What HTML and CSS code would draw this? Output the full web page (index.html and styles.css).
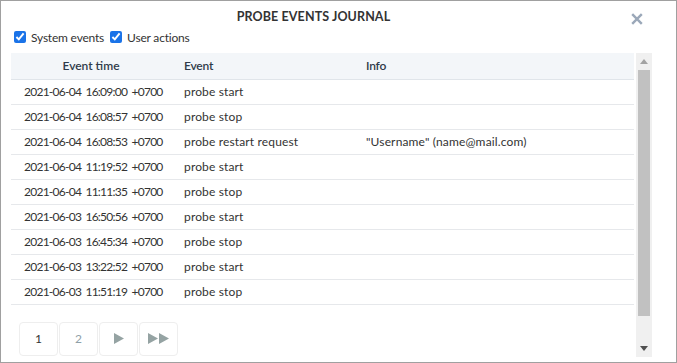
FILE: index.html
```html
<!DOCTYPE html>
<html>
<head>
<meta charset="utf-8">
<link rel="stylesheet" href="styles.css">
</head>
<body>
<div class="dialog">
  <div class="titlebar">
    <div class="title">PROBE EVENTS JOURNAL</div>
    <div class="close" aria-label="close">
      <svg width="12" height="12" viewBox="0 0 12 12"><path d="M1.2 1.2 L10.8 10.8 M10.8 1.2 L1.2 10.8" stroke="#9ba8b9" stroke-width="2.4" fill="none"/></svg>
    </div>
  </div>
  <div class="filters">
    <label class="check"><input type="checkbox" checked> System events</label>
    <label class="check"><input type="checkbox" checked> User actions</label>
  </div>
  <div class="scrollarea">
    <div class="content">
      <table class="events">
        <thead>
          <tr><th class="c-time">Event time</th><th class="c-event">Event</th><th class="c-info">Info</th></tr>
        </thead>
        <tbody>
          <tr><td class="time">2021-06-04 16:09:00 +0700</td><td>probe start</td><td></td></tr>
          <tr><td class="time">2021-06-04 16:08:57 +0700</td><td>probe stop</td><td></td></tr>
          <tr><td class="time">2021-06-04 16:08:53 +0700</td><td>probe restart request</td><td>"Username" (name@mail.com)</td></tr>
          <tr><td class="time">2021-06-04 11:19:52 +0700</td><td>probe start</td><td></td></tr>
          <tr><td class="time">2021-06-04 11:11:35 +0700</td><td>probe stop</td><td></td></tr>
          <tr><td class="time">2021-06-03 16:50:56 +0700</td><td>probe start</td><td></td></tr>
          <tr><td class="time">2021-06-03 16:45:34 +0700</td><td>probe stop</td><td></td></tr>
          <tr><td class="time">2021-06-03 13:22:52 +0700</td><td>probe start</td><td></td></tr>
          <tr><td class="time">2021-06-03 11:51:19 +0700</td><td>probe stop</td><td></td></tr>
        </tbody>
      </table>
      <div class="pager">
        <div class="pg current">1</div>
        <div class="pg">2</div>
        <div class="pg"><svg width="12" height="11" viewBox="0 0 12 11"><path d="M1 0 L11 5.5 L1 11 Z" fill="#95a3a3"/></svg></div>
        <div class="pg"><svg width="23" height="11" viewBox="0 0 23 11"><path d="M1 0 L11 5.5 L1 11 Z M12 0 L22 5.5 L12 11 Z" fill="#95a3a3"/></svg></div>
      </div>
    </div>
    <div class="scrollbar">
      <div class="sb-btn"><svg width="8" height="5" viewBox="0 0 8 5"><path d="M0 5 L4 0 L8 5 Z" fill="#a3a3a3"/></svg></div>
      <div class="sb-track"><div class="sb-thumb"></div></div>
      <div class="sb-btn"><svg width="8" height="5" viewBox="0 0 8 5"><path d="M0 0 L8 0 L4 5 Z" fill="#505050"/></svg></div>
    </div>
  </div>
</div>
</body>
</html>
```
FILE: styles.css
```css
* { box-sizing: border-box; }
html, body { margin: 0; padding: 0; background: #fff; }
body {
  font-family: Lato, "Open Sans", sans-serif;
  font-size: 12px;
  letter-spacing: -0.2px;
  color: #333;
}
.dialog {
  width: 677px;
  height: 363px;
  border: 1px solid #a0a0a0;
  position: relative;
  overflow: hidden;
}
.titlebar {
  height: 26px;
  display: flex;
  align-items: center;
  justify-content: center;
  padding-top: 5px;
  padding-right: 50px;
}
.title {
  font-weight: 700;
  font-size: 12.5px;
  letter-spacing: 0.1px;
  color: #333;
}
.close {
  position: absolute;
  right: 33px;
  top: 12px;
  width: 12px;
  height: 12px;
  display: flex;
}
.filters {
  display: flex;
  gap: 6px;
  padding-left: 13px;
  height: 20px;
  align-items: center;
}
.check {
  display: flex;
  align-items: center;
  gap: 5px;
  color: #333;
}
.check input {
  margin: 0;
  width: 12px;
  height: 12px;
  accent-color: #1a73e8;
}
.scrollarea {
  margin-top: 6px;
  margin-left: 10px;
  width: 641px;
  height: 304px;
  display: flex;
  gap: 1px;
}
.content {
  flex: 1;
  overflow: hidden;
}
.events {
  width: 623px;
  border-collapse: collapse;
  table-layout: fixed;
}
.events th {
  background: #f3f6f9;
  font-weight: 600;
  color: #2f3b4a;
  text-align: left;
  height: 26px;
  padding: 0 0 0 13px;
  border-bottom: 1px solid #e0e5ea;
}
.events th.c-time { width: 160px; text-align: center; padding: 0; letter-spacing: 0; }
.events th.c-event { width: 182px; }
.events td {
  height: 25px;
  padding: 0 0 0 13px;
  border-bottom: 1px solid #e6e8eb;
  white-space: nowrap;
  color: #333;
  letter-spacing: 0.15px;
}
.events td.time { letter-spacing: -0.75px; word-spacing: 2px; }
.pager {
  display: flex;
  gap: 1px;
  margin: 17px 0 0 8px;
}
.pg {
  width: 39px;
  height: 34px;
  border: 1px solid #eeeeee;
  border-radius: 4px;
  display: flex;
  align-items: center;
  justify-content: center;
  color: #8fa0a8;
}
.pg.current { color: #333; }
.scrollbar {
  width: 16px;
  height: 304px;
  background: #f0f0f0;
  display: flex;
  flex-direction: column;
}
.sb-btn {
  height: 17px;
  display: flex;
  align-items: center;
  justify-content: center;
}
.sb-track { flex: 1; padding: 0 2px 23px 2px; }
.sb-thumb { height: 246px; background: #c1c1c1; }
```
